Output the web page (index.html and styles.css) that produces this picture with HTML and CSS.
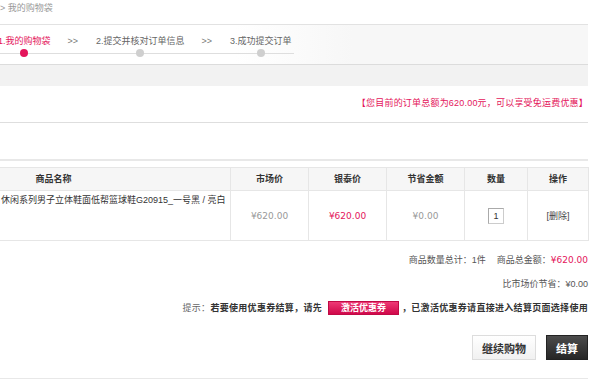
FILE: index.html
```html
<!DOCTYPE html>
<html lang="zh-CN">
<head>
    <meta charset="UTF-8">
    <meta name="viewport" content="width=device-width, initial-scale=1.0">
    <title>我的购物袋</title>
    <link rel="stylesheet" href="styles.css">
</head>
<body>
    <div class="page">
        <div class="crumb">&gt; 我的购物袋</div>

        <div class="flow">
            <ol class="steps">
                <li class="step on"><span>1.我的购物袋</span><i></i></li>
                <li class="sep">&gt;&gt;</li>
                <li class="step"><span>2.提交并核对订单信息</span><i></i></li>
                <li class="sep">&gt;&gt;</li>
                <li class="step"><span>3.成功提交订单</span><i></i></li>
            </ol>
        </div>
        <div class="band"></div>

        <div class="notice">【您目前的订单总额为620.00元，可以享受免运费优惠】</div>
        <div class="spacer"></div>

        <table class="cart">
            <colgroup>
                <col class="c-name">
                <col class="c-price">
                <col class="c-price">
                <col class="c-price">
                <col class="c-qty">
                <col class="c-op">
            </colgroup>
            <thead>
                <tr>
                    <th>商品名称</th>
                    <th>市场价</th>
                    <th>银泰价</th>
                    <th>节省金额</th>
                    <th>数量</th>
                    <th>操作</th>
                </tr>
            </thead>
            <tbody>
                <tr>
                    <td class="name">
                        <div class="goods">
                            <div class="thumb"></div>
                            <a href="#">休闲系列男子立体鞋面低帮篮球鞋G20915_一号黑 / 亮白</a>
                        </div>
                    </td>
                    <td class="price muted">¥620.00</td>
                    <td class="price hot">¥620.00</td>
                    <td class="price muted">¥0.00</td>
                    <td><input class="qty" type="text" value="1"></td>
                    <td><a href="#" class="del">[删除]</a></td>
                </tr>
            </tbody>
        </table>

        <div class="totals">
            <p>商品数量总计：1件<span class="gap"></span>商品总金额：<em>¥620.00</em></p>
            <p>比市场价节省：¥0.00</p>
            <p class="tip">
                <span class="label">提示：</span>若要使用优惠券结算，请先
                <button class="coupon">激活优惠券</button>
                ，已激活优惠券请直接进入结算页面选择使用
            </p>
        </div>

        <div class="actions">
            <button class="btn">继续购物</button>
            <button class="btn dark">结算</button>
        </div>

        <div class="foot">
            <div class="cell"></div>
            <div class="cell"></div>
            <div class="cell"></div>
            <div class="cell"></div>
            <div class="cell"></div>
            <div class="cell last"></div>
        </div>
    </div>
</body>
</html>
```

FILE: styles.css
```css
* {
    margin: 0;
    padding: 0;
    box-sizing: border-box;
}

html, body {
    height: 379px;
    overflow: hidden;
}

body {
    font-family: "Liberation Sans", "Noto Sans CJK SC", sans-serif;
    font-size: 9px;
    line-height: 12px;
    color: #333;
    background: #fff;
}

a {
    color: #333;
    text-decoration: none;
}

.page {
    width: 588px;
}

.crumb {
    color: #999;
    line-height: 16px;
    height: 24px;
}

/* steps bar */
.flow {
    height: 41px;
    border-top: 1px solid #e2e2e2;
    border-bottom: 1px solid #dcdcdc;
    background: linear-gradient(to right, #fff 40%, #f7f7f7 60%);
}

.steps {
    list-style: none;
    display: flex;
    align-items: flex-start;
    padding-top: 10px;
    margin-left: -2px;
    width: 296px;
    position: relative;
    color: #666;
    white-space: nowrap;
}

.steps::before {
    content: '';
    position: absolute;
    left: 2px;
    right: 0;
    top: 28px;
    height: 1px;
    background: #dedede;
}

.steps li {
    flex-shrink: 0;
}

.step {
    display: flex;
    flex-direction: column;
    align-items: center;
}

.step i {
    position: relative;
    width: 8px;
    height: 8px;
    margin-top: 2px;
    border-radius: 50%;
    background: #cfcfcf;
}

.step.on span {
    color: #e4155b;
}

.step.on i {
    background: #e4155b;
}

.sep {
    margin: 0 18px 0 17px;
    color: #777;
}

.band {
    height: 21px;
    background: #f2f2f2;
}

.notice {
    text-align: right;
    color: #e4155b;
    padding: 11px 0 13px;
    border-bottom: 1px solid #dedede;
    letter-spacing: 0.2px;
}

.spacer {
    height: 38px;
    border-bottom: 2px solid #e8e8e8;
    margin-bottom: 6px;
}

/* cart table */
.cart {
    width: 712px;
    margin-left: -124px;
    border-collapse: collapse;
    table-layout: fixed;
}

.c-name { width: 354px; }
.c-price { width: 78px; }
.c-qty { width: 63px; }
.c-op { width: 61px; }

.cart th,
.cart td {
    border: 1px solid #e6e6e6;
    text-align: center;
}

.cart th {
    height: 23px;
    background: #f6f6f6;
    font-weight: bold;
    color: #333;
}

.cart td {
    height: 50px;
    vertical-align: middle;
}

.cart td.name {
    text-align: left;
    vertical-align: top;
    padding-top: 3px;
}

.goods {
    display: flex;
    align-items: flex-start;
}

.thumb {
    width: 40px;
    height: 40px;
    margin: 0 84px 0 0;
    border: 1px solid #eee;
}

.price {
    font-family: "DejaVu Sans", "Noto Sans CJK SC", sans-serif;
}

.muted {
    color: #999;
}

.hot {
    color: #e4155b;
}

.qty {
    width: 16px;
    height: 16px;
    border: 1px solid #ccc;
    border-top-color: #aaa;
    border-left-color: #aaa;
    font: 9px "Liberation Sans", sans-serif;
    color: #333;
    text-align: center;
    padding: 0;
}

.del {
    color: #444;
}

/* totals */
.totals {
    padding-top: 13px;
    text-align: right;
    color: #555;
}

.totals p {
    margin-bottom: 12px;
}

.totals em {
    font-style: normal;
    font-family: "DejaVu Sans", sans-serif;
    font-size: 9px;
    color: #e4155b;
}

.gap {
    display: inline-block;
    width: 11px;
}

.totals .tip {
    display: flex;
    justify-content: flex-end;
    align-items: center;
    height: 14px;
    margin: -1px 0 0;
    color: #333;
    font-weight: bold;
    letter-spacing: 0.3px;
}

.tip .label {
    font-weight: normal;
    color: #666;
}

.coupon {
    width: 71px;
    height: 14px;
    margin: 0 3px 0 6px;
    border: 1px solid #c00a45;
    background: linear-gradient(#ee3a75, #d0084a);
    color: #fff;
    font: bold 9px "Noto Sans CJK SC", sans-serif;
    line-height: 12px;
    letter-spacing: 0;
}

.actions {
    display: flex;
    justify-content: flex-end;
    gap: 10px;
    margin-top: 20px;
}

.btn {
    height: 25px;
    padding: 0 9px;
    border: 1px solid #ddd;
    background: linear-gradient(#fff, #f1f1f1);
    color: #333;
    font: bold 11px "Noto Sans CJK SC", sans-serif;
}

.btn.dark {
    width: 42px;
    padding: 0;
    border-color: #222;
    background: linear-gradient(#4c4c4c, #262626);
    color: #fff;
}

/* footer strip */
.foot {
    display: flex;
    margin-top: 18px;
    border-top: 1px solid #e8e8e8;
    height: 3px;
}

.cell {
    width: 88px;
    border-right: 1px solid #e8e8e8;
    background: linear-gradient(225deg, #f0f0f0 12px, transparent 12px);
}

.cell:first-child {
    width: 52px;
}

.cell.last {
    flex: 1;
    border-right: 1px solid #e8e8e8;
    background: none;
}
```
